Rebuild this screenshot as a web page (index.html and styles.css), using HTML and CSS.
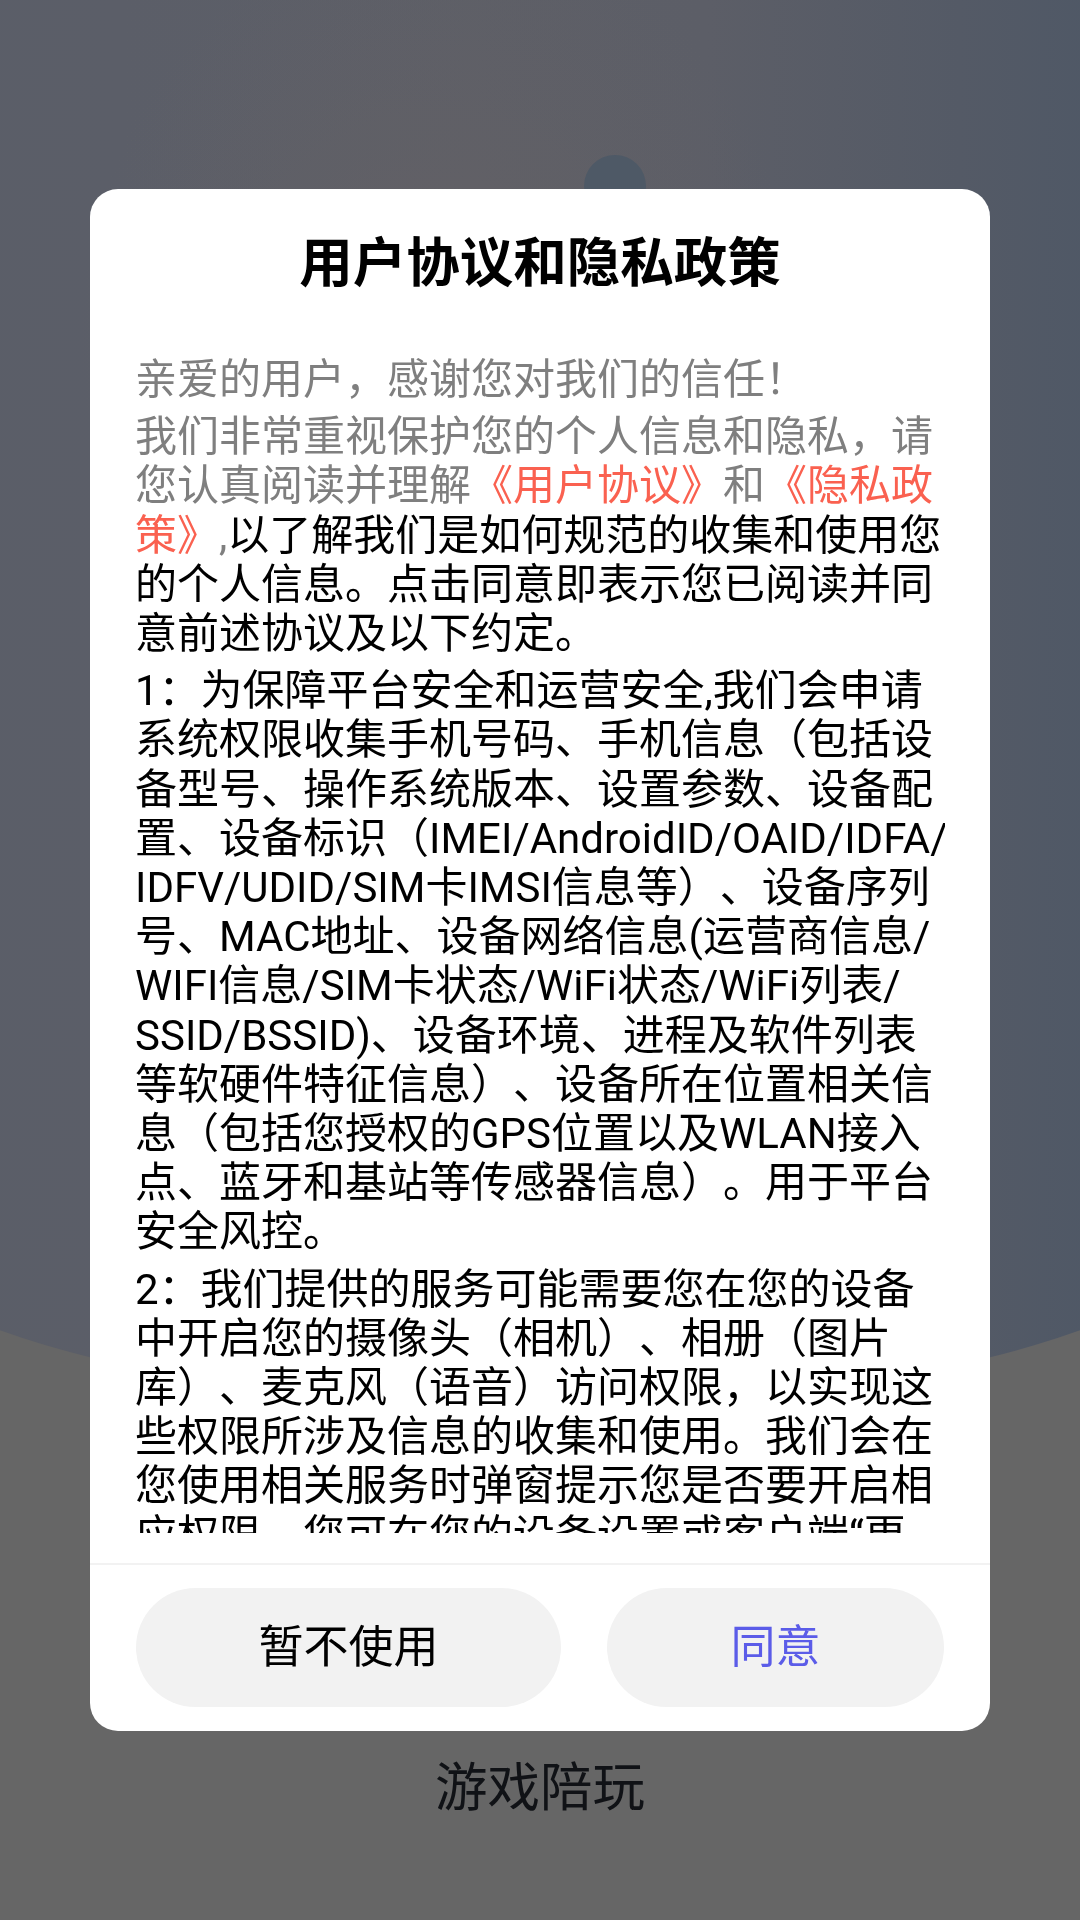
FILE: index.html
```html
<!DOCTYPE html>
<html lang="zh-CN">
<head>
<meta charset="utf-8">
<title>用户协议和隐私政策</title>
<link rel="stylesheet" href="styles.css">
</head>
<body>
<div class="splash">
  <div class="splash-bg"></div>
  <div class="splash-logo"></div>
  <div class="app-name">游戏陪玩</div>
</div>

<div class="mask">
  <div class="dialog">
    <h1 class="title">用户协议和隐私政策</h1>
    <div class="content">
      <p class="para muted">亲爱的用户，感谢您对我们的信任！</p>
      <p class="para"><span class="muted">我们非常重视保护您的个人信息和隐私，请<br>您认真阅读并理解</span><a class="link">《用户协议》</a><span class="muted">和</span><a class="link">《隐私政<br>策》</a><span class="muted">,</span>以了解我们是如何规范的收集和使用您<br>的个人信息。点击同意即表示您已阅读并同<br>意前述协议及以下约定。</p>
      <p class="para">1：为保障平台安全和运营安全,我们会申请<br>系统权限收集手机号码、手机信息（包括设<br>备型号、操作系统版本、设置参数、设备配<br>置、设备标识（IMEI/AndroidID/OAID/IDFA/<br>IDFV/UDID/SIM卡IMSI信息等）、设备序列<br>号、MAC地址、设备网络信息(运营商信息/<br>WIFI信息/SIM卡状态/WiFi状态/WiFi列表/<br>SSID/BSSID)、设备环境、进程及软件列表<br>等软硬件特征信息）、设备所在位置相关信<br>息（包括您授权的GPS位置以及WLAN接入<br>点、蓝牙和基站等传感器信息）。用于平台<br>安全风控。</p>
      <p class="para">2：我们提供的服务可能需要您在您的设备<br>中开启您的摄像头（相机）、相册（图片<br>库）、麦克风（语音）访问权限，以实现这<br>些权限所涉及信息的收集和使用。我们会在<br>您使用相关服务时弹窗提示您是否要开启相<br>应权限，您可在您的设备设置或客户端“更<br>多”中关闭相应权限。</p>
      <p class="para">3：我们会采取业界领先的安全措施保护您<br>的信息安全。</p>
    </div>
    <div class="divider"></div>
    <div class="actions">
      <button class="btn btn-cancel" type="button">暂不使用</button>
      <button class="btn btn-ok" type="button">同意</button>
    </div>
  </div>
</div>
</body>
</html>
```

FILE: styles.css
```css
html, body {
  margin: 0;
  padding: 0;
}

body {
  width: 1080px;
  height: 1920px;
  overflow: hidden;
  background: #666666;
  font-family: Roboto, "Noto Sans CJK SC", sans-serif;
  text-spacing-trim: space-all;
}

/* splash page underneath the modal (already dimmed) */
.splash {
  position: relative;
  height: 1920px;
  box-sizing: border-box;
  padding-bottom: 102px;
  display: flex;
  flex-direction: column;
  justify-content: flex-end;
  align-items: center;
  overflow: hidden;
}

.splash-bg {
  position: absolute;
  left: -160px;
  top: 0;
  width: 1400px;
  height: 1406px;
  border-bottom-left-radius: 700px 208px;
  border-bottom-right-radius: 700px 208px;
  background:
    radial-gradient(ellipse 360px 420px at 600px 340px, rgba(104, 98, 100, 0.55), rgba(104, 98, 100, 0) 100%),
    linear-gradient(90deg, #5a5e68 0%, #5b5e68 20%, #5d5f67 45%, #5c5e67 62%, #545a66 80%, #4a5666 100%);
}

.splash-logo {
  position: absolute;
  left: 584px;
  top: 155px;
  width: 62px;
  height: 62px;
  border-radius: 50%;
  background: #4e5966;
}

.app-name {
  position: relative;
  font-size: 52.5px;
  line-height: 60px;
  color: #101216;
}

/* modal */
.mask {
  position: fixed;
  inset: 0;
  box-sizing: border-box;
  padding-top: 189px;
  display: flex;
  justify-content: center;
  align-items: flex-start;
}

.dialog {
  width: 900px;
  height: 1542px;
  background: #ffffff;
  border-radius: 28px;
  display: flex;
  flex-direction: column;
  overflow: hidden;
}

.title {
  margin: 0;
  padding-top: 39px;
  font-size: 53.5px;
  line-height: 72px;
  font-weight: 700;
  color: #000000;
  text-align: center;
}

.content {
  flex: 1;
  min-height: 0;
  overflow: hidden;
  margin: 55px 45px 30px;
  font-size: 42px;
  line-height: 49.2px;
  color: #000000;
  text-spacing-trim: space-all;
}

.para {
  margin: 0 0 8px;
  white-space: nowrap;
}

.muted {
  color: #7f7f7f;
}

.link {
  color: #fa6150;
  text-decoration: none;
}

.divider {
  height: 2px;
  background: #f2f2f2;
  flex: none;
}

.actions {
  flex: none;
  display: grid;
  grid-template-columns: 425px 1fr;
  gap: 46px;
  padding: 23px 46px 24px;
}

.btn {
  height: 119px;
  border: none;
  border-radius: 60px;
  background: #f2f2f2;
  font-family: Roboto, "Noto Sans CJK SC", sans-serif;
  font-size: 45px;
  line-height: 1;
  padding: 0;
  cursor: pointer;
}

.btn-cancel {
  color: #000000;
}

.btn-ok {
  color: #5b5ce8;
}
```
